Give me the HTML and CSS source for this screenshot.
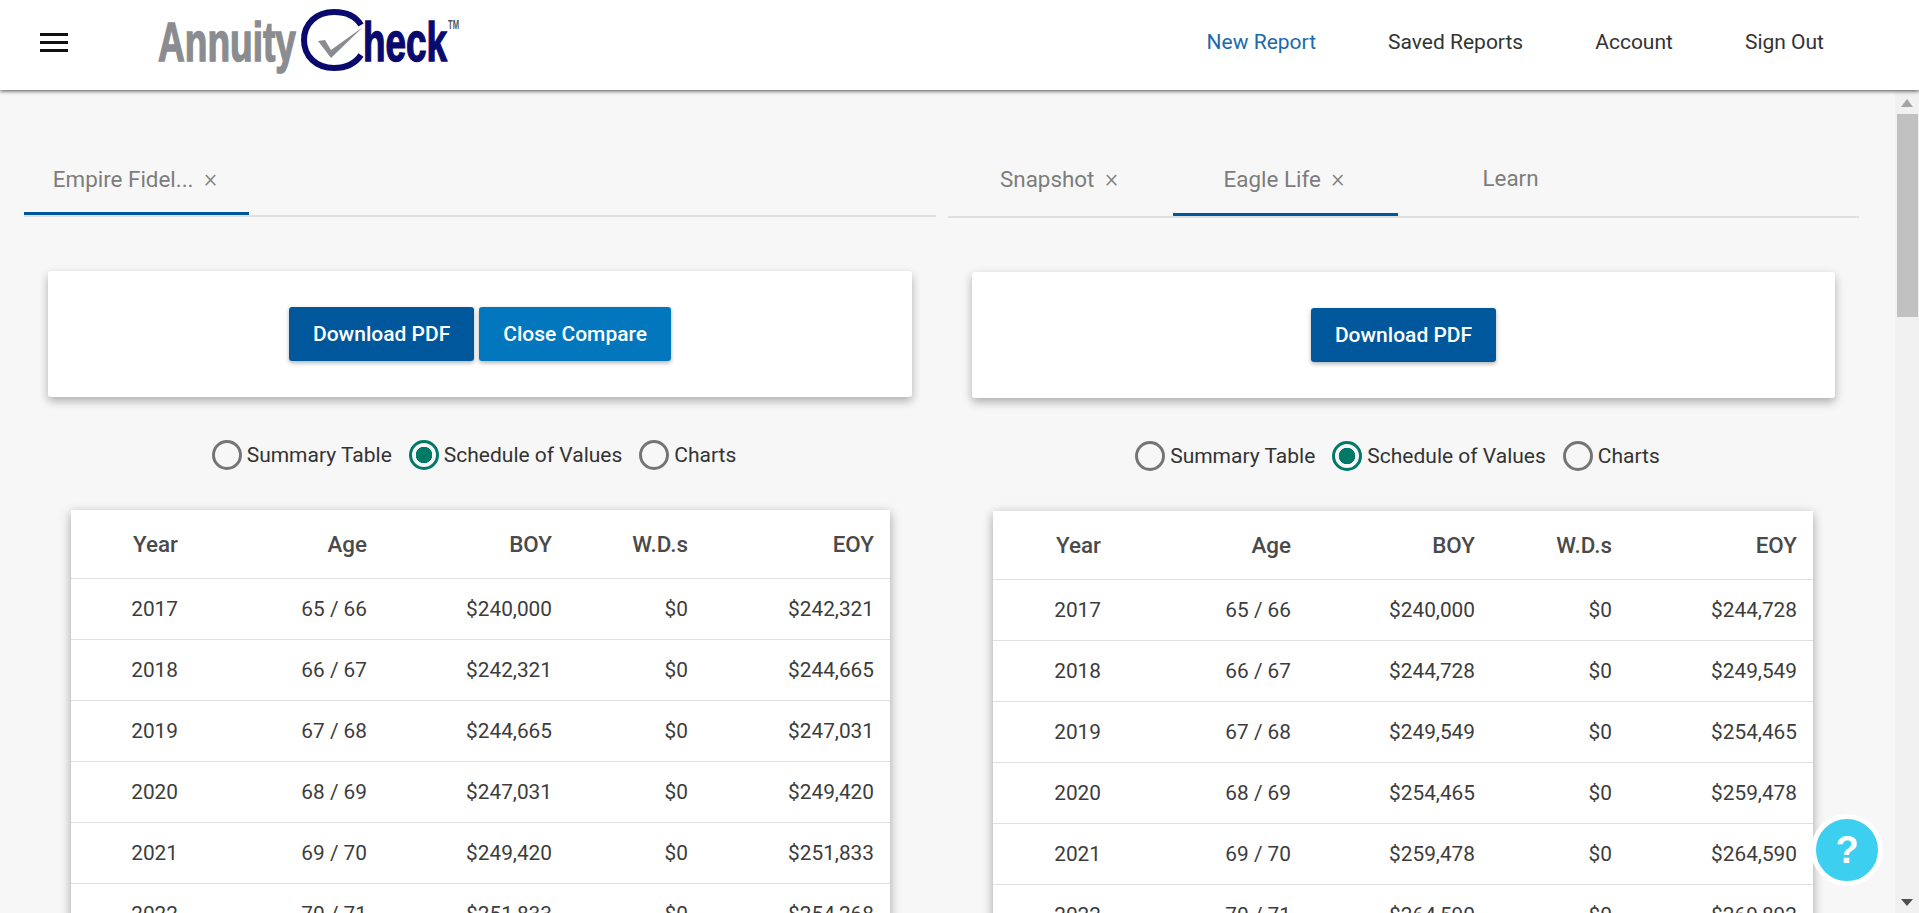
FILE: index.html
```html
<!DOCTYPE html>
<html lang="en">
<head>
  <meta charset="UTF-8" />
  <meta name="viewport" content="width=device-width, initial-scale=1.0"/>
  <title>AnnuityCheck</title>
  <link rel="stylesheet" href="styles.css">
</head>
<body>
  <header class="topbar">
    <div class="menu-icon"><span></span><span></span><span></span></div>
    <svg class="logo" width="304" height="66" viewBox="0 0 304 66">
      <text class="logo-grey" x="0" y="53" textLength="138" lengthAdjust="spacingAndGlyphs">Annuity</text>
      <path d="M203 17 C197 7 188 4 176 4 C158 4 146 16 146 32 C146 48 158 60 176 60 C188 60 197 56 203 47" fill="none" stroke="#0a0a6e" stroke-width="6"/>
      <path d="M160 33 L167 32 L173 42 L205 19 L173 50 Z" fill="#8a8c90"/>
      <text class="logo-navy" x="205" y="53" textLength="84" lengthAdjust="spacingAndGlyphs">heck</text>
      <text class="logo-tm" x="290" y="21" textLength="11" lengthAdjust="spacingAndGlyphs">TM</text>
    </svg>
    <nav class="topnav">
      <a class="active">New Report</a>
      <a>Saved Reports</a>
      <a>Account</a>
      <a>Sign Out</a>
    </nav>
  </header>

  <div class="page">
    <main class="panes">
      <section class="pane">
        <div class="tabs">
          <div class="tab active">Empire Fidel... <i>×</i></div>
        </div>
        <div class="card">
          <button class="btn">Download PDF</button>
          <button class="btn btn-light">Close Compare</button>
        </div>
        <div class="radios">
          <label><span class="radio"></span>Summary Table</label>
          <label><span class="radio on"></span>Schedule of Values</label>
          <label><span class="radio"></span>Charts</label>
        </div>
        <table class="values">
          <colgroup><col class="c1"><col class="c2"><col class="c3"><col class="c4"><col class="c5"></colgroup>
          <thead><tr><th>Year</th><th>Age</th><th>BOY</th><th>W.D.s</th><th>EOY</th></tr></thead>
          <tbody>
            <tr><td>2017</td><td>65 / 66</td><td>$240,000</td><td>$0</td><td>$242,321</td></tr>
            <tr><td>2018</td><td>66 / 67</td><td>$242,321</td><td>$0</td><td>$244,665</td></tr>
            <tr><td>2019</td><td>67 / 68</td><td>$244,665</td><td>$0</td><td>$247,031</td></tr>
            <tr><td>2020</td><td>68 / 69</td><td>$247,031</td><td>$0</td><td>$249,420</td></tr>
            <tr><td>2021</td><td>69 / 70</td><td>$249,420</td><td>$0</td><td>$251,833</td></tr>
            <tr><td>2022</td><td>70 / 71</td><td>$251,833</td><td>$0</td><td>$254,268</td></tr>
          </tbody>
        </table>
      </section>

      <section class="pane pane-right">
        <div class="tabs">
          <div class="tab">Snapshot <i>×</i></div>
          <div class="tab active">Eagle Life <i>×</i></div>
          <div class="tab">Learn</div>
        </div>
        <div class="card">
          <button class="btn">Download PDF</button>
        </div>
        <div class="radios">
          <label><span class="radio"></span>Summary Table</label>
          <label><span class="radio on"></span>Schedule of Values</label>
          <label><span class="radio"></span>Charts</label>
        </div>
        <table class="values">
          <colgroup><col class="c1"><col class="c2"><col class="c3"><col class="c4"><col class="c5"></colgroup>
          <thead><tr><th>Year</th><th>Age</th><th>BOY</th><th>W.D.s</th><th>EOY</th></tr></thead>
          <tbody>
            <tr><td>2017</td><td>65 / 66</td><td>$240,000</td><td>$0</td><td>$244,728</td></tr>
            <tr><td>2018</td><td>66 / 67</td><td>$244,728</td><td>$0</td><td>$249,549</td></tr>
            <tr><td>2019</td><td>67 / 68</td><td>$249,549</td><td>$0</td><td>$254,465</td></tr>
            <tr><td>2020</td><td>68 / 69</td><td>$254,465</td><td>$0</td><td>$259,478</td></tr>
            <tr><td>2021</td><td>69 / 70</td><td>$259,478</td><td>$0</td><td>$264,590</td></tr>
            <tr><td>2022</td><td>70 / 71</td><td>$264,590</td><td>$0</td><td>$269,892</td></tr>
          </tbody>
        </table>
      </section>
    </main>

    <aside class="scrollbar">
      <div class="arrow-up"></div>
      <div class="thumb"></div>
      <div class="track"></div>
      <div class="arrow-down"></div>
    </aside>
  </div>

  <div class="help">?</div>
</body>
</html>
```

FILE: styles.css
```css
html, body {
  margin: 0;
  height: 100%;
  overflow: hidden;
}

body {
  display: flex;
  flex-direction: column;
  font-family: Roboto, sans-serif;
  background: #f7f7f7;
  color: #333;
}

.topbar {
  display: flex;
  align-items: center;
  flex: 0 0 90px;
  background: #fff;
  box-shadow: 0 1px 4px rgba(0,0,0,0.7);
  position: relative;
  z-index: 2;
}

.menu-icon {
  display: flex;
  flex-direction: column;
  gap: 5px;
  width: 28px;
  margin-left: 40px;
  margin-bottom: 6px;
}

.menu-icon span {
  height: 3px;
  background: #111;
}

.logo {
  margin-left: 90px;
  margin-bottom: 8px;
  overflow: visible;
}

.logo text {
  font-family: "Liberation Sans", sans-serif;
  font-weight: 700;
}

.logo-grey {
  font-size: 56px;
  fill: #8a8c90;
  stroke: #8a8c90;
  stroke-width: 1.5px;
}

.logo-navy {
  font-size: 56px;
  fill: #0a0a6e;
  stroke: #0a0a6e;
  stroke-width: 1.5px;
}

.logo-tm {
  font-size: 13px;
  fill: #555;
}

.topnav {
  display: flex;
  gap: 72px;
  margin-left: auto;
  margin-right: 95px;
  margin-bottom: 6px;
  font-size: 21px;
  color: #333;
}

.topnav .active {
  color: #1a6aad;
}

.page {
  display: flex;
  flex: 1;
  min-height: 0;
}

.panes {
  flex: 1;
  display: flex;
  gap: 12px;
  padding-left: 24px;
  overflow: hidden;
}

.pane {
  width: 912px;
  flex: none;
}

.pane-right {
  width: 911px;
  padding-top: 1px;
}

.tabs {
  display: flex;
  height: 70px;
  margin-top: 55px;
  border-bottom: 2px solid #e0e0e0;
}

.tab {
  width: 225px;
  height: 70px;
  box-sizing: border-box;
  text-align: center;
  line-height: 67px;
  font-size: 22.4px;
  color: #7d7d7d;
}

.pane-right .tab {
  line-height: 65px;
}

.tab i {
  font-style: normal;
  font-weight: 300;
  font-size: 25px;
  margin: 0 3px 0 5px;
}

.tab.active {
  border-bottom: 3px solid #00579c;
}

.card {
  display: flex;
  justify-content: center;
  align-items: center;
  gap: 5px;
  height: 126px;
  margin: 54px 24px 0;
  background: #fff;
  border-radius: 3px;
  box-shadow: 0 4px 10px rgba(0,0,0,0.3);
}

.btn {
  height: 54px;
  padding: 0 24px;
  border: none;
  border-radius: 3px;
  background: #00579c;
  color: #fff;
  font-family: Roboto, sans-serif;
  font-size: 21px;
  font-weight: 500;
  box-shadow: 0 2px 4px rgba(0,0,0,0.3);
}

.btn-light {
  background: #0277bd;
}

.radios {
  display: flex;
  justify-content: center;
  gap: 17px;
  margin-top: 43px;
  padding-right: 12px;
  font-size: 21px;
}

.radios label {
  display: flex;
  align-items: center;
  gap: 5px;
  height: 30px;
}

.radio {
  width: 30px;
  height: 30px;
  box-sizing: border-box;
  border: 3px solid #757575;
  border-radius: 50%;
}

.radio.on {
  border-color: #007a66;
  background: radial-gradient(circle, #007a66 0 8px, transparent 8.5px);
}

.values {
  width: 819px;
  margin: 40px 0 0 47px;
  table-layout: fixed;
  border-collapse: collapse;
  background: #fff;
  box-shadow: 0 3px 10px rgba(0,0,0,0.35);
  font-size: 20.8px;
  color: #3c3c3c;
}

.c1 { width: 123px; }
.c2 { width: 189px; }
.c3 { width: 185px; }
.c4 { width: 136px; }
.c5 { width: 186px; }

.pane-right .values {
  width: 820px;
  margin-left: 45px;
}

.pane-right .c1 { width: 124px; }
.pane-right .c2 { width: 190px; }
.pane-right .c3 { width: 184px; }
.pane-right .c4 { width: 137px; }
.pane-right .c5 { width: 185px; }

.values th,
.values td {
  padding: 0 16px 0 0;
  text-align: right;
  border-bottom: 1px solid #e0e0e0;
}

.values th {
  height: 68px;
  font-size: 22.4px;
  font-weight: 500;
  color: #4a4a4a;
}

.values td {
  height: 60px;
}

.scrollbar {
  flex: 0 0 24px;
  display: flex;
  flex-direction: column;
  align-items: center;
  background: #f1f1f1;
}

.arrow-up {
  margin: 9px 0 7px;
  border: 6px solid transparent;
  border-top: 0;
  border-bottom: 8px solid #a3a3a3;
}

.thumb {
  width: 21px;
  height: 203px;
  background: #c1c1c1;
}

.track {
  flex: 1;
}

.arrow-down {
  margin-bottom: 7px;
  border: 6px solid transparent;
  border-bottom: 0;
  border-top: 7px solid #505050;
}

.help {
  position: fixed;
  left: 1811px;
  top: 814px;
  width: 62px;
  height: 62px;
  border: 5px solid #fff;
  border-radius: 50%;
  background: #3ccff0;
  color: #fff;
  font-family: "Liberation Sans", sans-serif;
  font-size: 38px;
  font-weight: 700;
  line-height: 62px;
  text-align: center;
}
```
